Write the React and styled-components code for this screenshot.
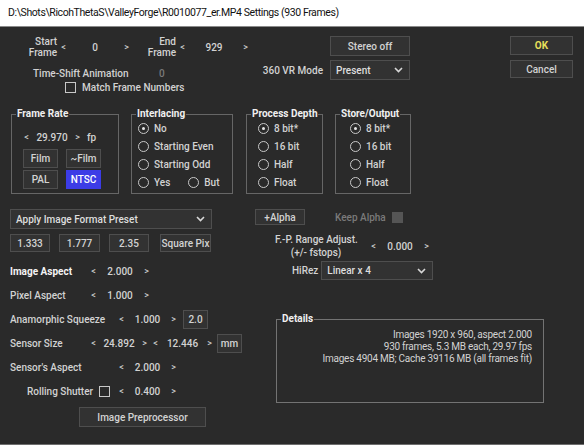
import React from 'react';
import styled, { createGlobalStyle } from 'styled-components';

const Global = createGlobalStyle`
  html, body { margin: 0; padding: 0; background: #2a2a2a; }
  body { font-family: Roboto, "Noto Sans", sans-serif; }
  * { box-sizing: border-box; }
`;

const Window = styled.div`
  width: 584px;
  height: 445px;
  display: flex;
  flex-direction: column;
  background: #2a2a2a;
  color: #d2d2d2;
  font-size: 10px;
  font-weight: 500;
  border-bottom: 1px solid #6e6e6e;
  overflow: hidden;
`;

const TitleBar = styled.div`
  height: 27px;
  flex: none;
  display: flex;
  align-items: center;
  padding: 0 0 1px 8px;
  background: #fff;
  color: #111;
  font-size: 10.5px;
  font-weight: 400;
  letter-spacing: -0.4px;
  border-bottom: 1px solid #8a8a8a;
`;

const Top = styled.div`
  display: flex;
  margin-top: 9px;
  height: 64px;
`;

const Stack = styled.div`
  display: flex;
  flex-direction: column;
  width: ${p => p.$w || 'auto'};
  margin-left: ${p => p.$ml || 0}px;
  margin-top: ${p => p.$mt || 0}px;
  align-items: ${p => p.$align || 'stretch'};
  gap: ${p => p.$gap || 0}px;
`;

const Row = styled.div`
  display: flex;
  align-items: center;
  height: ${p => p.$h ? `${p.$h}px` : 'auto'};
  margin-top: ${p => p.$mt || 0}px;
  margin-left: ${p => p.$ml || 0}px;
  gap: ${p => p.$gap || 0}px;
`;

const TwoLine = styled.div`
  width: ${p => p.$w}px;
  text-align: ${p => p.$align || 'right'};
  line-height: ${p => p.$lh || 11}px;
  white-space: nowrap;
`;

const Label = styled.span`
  display: inline-block;
  width: ${p => p.$w ? `${p.$w}px` : 'auto'};
  margin-left: ${p => p.$ml || 0}px;
  font-weight: ${p => p.$bold ? 700 : 500};
  color: ${p => p.$bold ? '#f4f4f4' : p.$dim ? '#7a7a7a' : 'inherit'};
  white-space: nowrap;
`;

const SpinBox = styled.div`
  display: flex;
  align-items: center;
  width: ${p => p.$w}px;
  margin-left: ${p => p.$ml || 0}px;
  flex: none;
`;

const Arrow = styled.span`
  width: 7px;
  text-align: center;
  font-size: 9px;
  color: #cfcfcf;
`;

const SpinValue = styled.span`
  flex: 1;
  text-align: center;
`;

const Spinner = ({ value, w, ml }) => (
  <SpinBox $w={w} $ml={ml}>
    <Arrow>&lt;</Arrow>
    <SpinValue>{value}</SpinValue>
    <Arrow>&gt;</Arrow>
  </SpinBox>
);

const Button = styled.div`
  display: flex;
  align-items: center;
  justify-content: center;
  flex: none;
  width: ${p => p.$w}px;
  height: ${p => p.$h || 19}px;
  margin-left: ${p => p.$ml || 0}px;
  margin-top: ${p => p.$mt || 0}px;
  background: ${p => p.$active ? '#3c3ce6' : '#323232'};
  border: 1px solid ${p => p.$active ? '#3c3ce6' : '#4e4e4e'};
  color: ${p => p.$yellow ? '#e6df5a' : p.$active ? '#fff' : '#d2d2d2'};
  font-weight: ${p => p.$yellow ? 700 : 500};
  white-space: nowrap;
`;

const Select = styled.div`
  display: flex;
  align-items: center;
  justify-content: space-between;
  flex: none;
  width: ${p => p.$w}px;
  height: ${p => p.$h || 20}px;
  margin-left: ${p => p.$ml || 0}px;
  padding: 0 6px 0 5px;
  background: #323232;
  border: 1px solid #4e4e4e;
  color: #dedede;
`;

const Chevron = () => (
  <svg width="9" height="6" viewBox="0 0 9 6">
    <path d="M1 1 L4.5 4.5 L8 1" fill="none" stroke="#d8d8d8" strokeWidth="1.6" />
  </svg>
);

const Dropdown = ({ text, w, h, ml }) => (
  <Select $w={w} $h={h} $ml={ml}>
    <span>{text}</span>
    <Chevron />
  </Select>
);

const CheckBox = styled.span`
  display: inline-block;
  flex: none;
  width: 11px;
  height: 11px;
  margin-left: ${p => p.$ml || 0}px;
  border: 1px solid ${p => p.$disabled ? '#555' : '#c8c8c8'};
  background: ${p => p.$disabled ? '#555' : 'transparent'};
`;

const Groups = styled.div`
  display: flex;
  margin-top: 8px;
  padding-left: 11px;
`;

const Group = styled.fieldset`
  margin: 0 0 0 ${p => p.$ml || 0}px;
  width: ${p => p.$w}px;
  height: 86px;
  padding: 0 0 0 ${p => p.$pl || 0}px;
  border: 1px solid #666;
  display: flex;
  flex-direction: column;
  min-width: 0;

  legend {
    padding: 0 1px;
    margin-left: ${p => 4 - (p.$pl || 0)}px;
    font-weight: 700;
    line-height: 12px;
    color: #f0f0f0;
    white-space: nowrap;
  }
`;

const RadioList = styled.div`
  display: flex;
  flex-direction: column;
  gap: 4px;
  margin-top: 1px;
`;

const RadioRow = styled.div`
  display: flex;
  align-items: center;
  height: 14px;
  gap: 18px;
`;

const RadioItem = styled.span`
  display: flex;
  align-items: center;
  height: 14px;
  gap: 5px;
  white-space: nowrap;
`;

const Circle = styled.span`
  width: 11px;
  height: 11px;
  border-radius: 50%;
  border: 1.5px solid #c8c8c8;
  display: flex;
  align-items: center;
  justify-content: center;

  &::after {
    content: '';
    width: 3px;
    height: 3px;
    border-radius: 50%;
    background: ${p => p.$on ? '#e8e8e8' : 'transparent'};
  }
`;

const Radio = ({ on, children }) => (
  <RadioItem>
    <Circle $on={on} />
    {children}
  </RadioItem>
);

const Lower = styled.div`
  display: flex;
  margin-top: 15px;
`;

const LeftCol = styled.div`
  display: flex;
  flex-direction: column;
  width: 245px;
  margin-left: 10px;
`;

const RightCol = styled.div`
  display: flex;
  flex-direction: column;
`;

const AspectRow = styled.div`
  display: flex;
  align-items: center;
  height: 24px;
  padding-left: ${p => p.$pl || 0}px;
`;

const Details = styled.fieldset`
  margin: 33px 0 0 21px;
  width: 268px;
  height: 90px;
  padding: 4px 11px 0 0;
  border: 1px solid #737373;
  min-width: 0;
  text-align: right;
  line-height: 12px;
  font-weight: 400;
  letter-spacing: -0.25px;

  legend {
    padding: 0 1px;
    margin-left: 4px;
    font-weight: 700;
    line-height: 12px;
    letter-spacing: 0;
    color: #f0f0f0;
    text-align: left;
  }
`;

export default function App() {
  return (
    <Window>
      <Global />
      <TitleBar>D:\Shots\RicohThetaS\ValleyForge\R0010077_er.MP4 Settings (930 Frames)</TitleBar>

      <Top>
        <Stack $w="255px">
          <Row $h={22}>
            <TwoLine $w={57}>Start<br />Frame</TwoLine>
            <Spinner value="0" w={70} ml={3} />
            <TwoLine $w={46}>End<br />Frame</TwoLine>
            <Spinner value="929" w={70} ml={3} />
          </Row>
          <Row $h={14} $mt={8}>
            <Label $ml={33} $w={126}>Time-Shift Animation</Label>
            <Label $dim>0</Label>
          </Row>
          <Row $h={14}>
            <CheckBox $ml={65} />
            <Label $ml={6}>Match Frame Numbers</Label>
          </Row>
        </Stack>
        <Stack $w="155px" $align="flex-end" $gap={4}>
          <Button $w={80} $h={20}>Stereo off</Button>
          <Row>
            <Label>360 VR Mode</Label>
            <Dropdown text="Present" w={80} ml={7} />
          </Row>
        </Stack>
        <Stack $ml={100} $gap={5}>
          <Button $w={63} $yellow>OK</Button>
          <Button $w={63} $h={18}>Cancel</Button>
        </Stack>
      </Top>

      <Groups>
        <Group $w={108} $pl={11}>
          <legend>Frame Rate</legend>
          <Row $h={18} $mt={8}>
            <Spinner value="29.970" w={58} />
            <Label $ml={6}>fp</Label>
          </Row>
          <Row $mt={3} $gap={8}>
            <Button $w={35}>Film</Button>
            <Button $w={35}>~Film</Button>
          </Row>
          <Row $mt={2} $gap={8}>
            <Button $w={35}>PAL</Button>
            <Button $w={35} $active>NTSC</Button>
          </Row>
        </Group>

        <Group $w={102} $ml={12} $pl={6}>
          <legend>Interlacing</legend>
          <RadioList>
            <Radio on>No</Radio>
            <Radio>Starting Even</Radio>
            <Radio>Starting Odd</Radio>
            <RadioRow>
              <Radio>Yes</Radio>
              <Radio>But</Radio>
            </RadioRow>
          </RadioList>
        </Group>

        <Group $w={77} $ml={13} $pl={11}>
          <legend>Process Depth</legend>
          <RadioList>
            <Radio on>8 bit*</Radio>
            <Radio>16 bit</Radio>
            <Radio>Half</Radio>
            <Radio>Float</Radio>
          </RadioList>
        </Group>

        <Group $w={76} $ml={12} $pl={14}>
          <legend>Store/Output</legend>
          <RadioList>
            <Radio on>8 bit*</Radio>
            <Radio>16 bit</Radio>
            <Radio>Half</Radio>
            <Radio>Float</Radio>
          </RadioList>
        </Group>
      </Groups>

      <Lower>
        <LeftCol>
          <Dropdown text="Apply Image Format Preset" w={202} />
          <Row $mt={5}>
            <Button $w={40} $h={18}>1.333</Button>
            <Button $w={41} $h={18} $ml={9}>1.777</Button>
            <Button $w={40} $h={18} $ml={9}>2.35</Button>
            <Button $w={51} $h={18} $ml={11}>Square Pix</Button>
          </Row>
          <Stack $mt={7}>
            <AspectRow>
              <Label $bold $w={80}>Image Aspect</Label>
              <Spinner value="2.000" w={60} />
            </AspectRow>
            <AspectRow>
              <Label $w={80}>Pixel Aspect</Label>
              <Spinner value="1.000" w={60} />
            </AspectRow>
            <AspectRow>
              <Label $w={108}>Anamorphic Squeeze</Label>
              <Spinner value="1.000" w={59} />
              <Button $w={25} $ml={6}>2.0</Button>
            </AspectRow>
            <AspectRow>
              <Label $w={80}>Sensor Size</Label>
              <Spinner value="24.892" w={58} />
              <Spinner value="12.446" w={61} ml={4} />
              <Button $w={25} $ml={4}>mm</Button>
            </AspectRow>
            <AspectRow>
              <Label $w={108}>Sensor's Aspect</Label>
              <Spinner value="2.000" w={59} />
            </AspectRow>
            <AspectRow $pl={17}>
              <Label $w={72}>Rolling Shutter</Label>
              <CheckBox />
              <Spinner value="0.400" w={59} ml={8} />
            </AspectRow>
          </Stack>
          <Button $w={127} $h={20} $ml={69} $mt={4}>Image Preprocessor</Button>
        </LeftCol>

        <RightCol>
          <Row $h={16}>
            <Button $w={50} $h={16}>+Alpha</Button>
            <Label $dim $ml={30}>Keep Alpha</Label>
            <CheckBox $disabled $ml={6} />
          </Row>
          <Row $mt={8} $ml={20}>
            <TwoLine $w={82} $align="center" $lh={13}>F.-P. Range Adjust.<br />(+/- fstops)</TwoLine>
            <Spinner value="0.000" w={60} ml={13} />
          </Row>
          <Row $mt={2} $ml={37}>
            <Label>HiRez</Label>
            <Dropdown text="Linear x 4" w={112} h={19} ml={3} />
          </Row>
          <Details>
            <legend>Details</legend>
            Images 1920 x 960, aspect 2.000<br />
            930 frames, 5.3 MB each, 29.97 fps<br />
            Images 4904 MB; Cache 39116 MB (all frames fit)
          </Details>
        </RightCol>
      </Lower>
    </Window>
  );
}
